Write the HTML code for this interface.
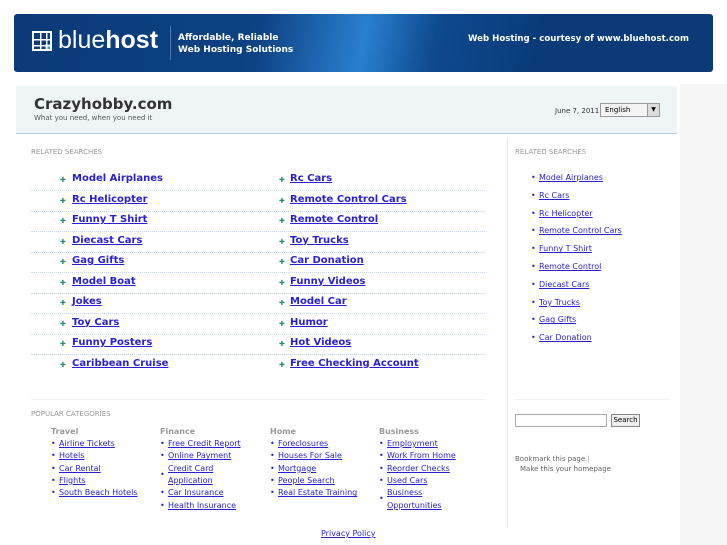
<!DOCTYPE html>
<html><head><meta charset="utf-8"><style>
*{margin:0;padding:0;box-sizing:border-box}
body{width:727px;height:545px;overflow:hidden;background:#fff;font-family:"DejaVu Sans","Liberation Sans",sans-serif;position:relative}
.a{position:absolute;white-space:nowrap}
a{color:#2a1fcf;text-decoration:underline}
#banner{left:14px;top:14px;width:699px;height:58px;border-radius:3px;background:linear-gradient(100deg,#0b3a78 0%,#0d4283 35%,#2a7fd0 50%,#0e4a8e 60%,#0a3a78 75%,#0b3a76 100%)}
#strip{left:680px;top:84px;width:47px;height:461px;background:#f6f6f6}
#hdr{left:16px;top:86px;width:661px;height:48px;background:#eff4f7;border-bottom:1px solid #b7cde8}
.ml{font-size:10px;font-weight:bold}
.bul{font-size:7px;color:#2a8a7a}
.dot{left:31px;width:454px;border-top:1px dotted #c9d6e3;height:0}
.sl{font-size:8px}
.sb{font-size:8px;color:#2a1fcf}
.cat{font-size:8px}
.ch{font-size:8px;font-weight:bold;color:#999}
.lbl{font-size:7px;color:#999}
</style></head><body>
<div id="banner" class="a"></div>
<div class="a" style="left:32px;top:31px;width:20px;height:20px;border:2px solid #fff;background:linear-gradient(#fff 0 0) 6px 0/1.5px 100% no-repeat,linear-gradient(#fff 0 0) 12px 0/1.5px 100% no-repeat,linear-gradient(#fff 0 0) 0 6px/100% 1.5px no-repeat,linear-gradient(#fff 0 0) 0 12px/100% 1.5px no-repeat,linear-gradient(#3aa 0 0) 11px 11px/6px 6px no-repeat"></div>
<div class="a" style="left:58px;top:26px;font-size:25px;color:#fff;font-family:'Liberation Sans',sans-serif">blue<b>host</b></div>
<div class="a" style="left:170px;top:26px;width:1px;height:34px;background:#4d77ad"></div>
<div class="a" style="left:178px;top:32px;font-size:9px;font-weight:bold;color:#fff;line-height:12px">Affordable, Reliable<br>Web Hosting Solutions</div>
<div class="a" style="left:468px;top:34px;font-size:8.6px;font-weight:bold;color:#fff">Web Hosting - courtesy of www.bluehost.com</div>
<div id="strip" class="a"></div>
<div id="hdr" class="a"></div>
<div class="a" style="left:34px;top:95px;font-size:15px;font-weight:bold;color:#333">Crazyhobby.com</div>
<div class="a" style="left:34px;top:114px;font-size:7px;color:#555">What you need, when you need it</div>
<div class="a" style="left:555px;top:107px;font-size:7px;color:#333">June 7, 2011</div>
<div class="a" style="left:600px;top:103px;width:60px;height:14px;border:1px solid #999;background:#f4f4f4;font-size:7px;padding:2px 4px">English</div>
<div class="a" style="left:647px;top:104px;width:12px;height:12px;background:#ddd;border-left:1px solid #999;font-size:6px;text-align:center;line-height:12px">▼</div>
<div class="a" style="left:507px;top:138px;width:1px;height:390px;background:#dfe7f2"></div>
<div class="a lbl" style="left:31px;top:148px">RELATED SEARCHES</div>
<div class="a lbl" style="left:515px;top:148px">RELATED SEARCHES</div>
<div id="main"></div>
<div class="a dot" style="top:399px;border-top:1px solid #eef2f6"></div>
<div class="a" style="left:515px;top:399px;width:155px;border-top:1px solid #eef2f6"></div>
<div class="a lbl" style="left:31px;top:410px">POPULAR CATEGORIES</div>
<div class="a" style="left:515px;top:414px;width:92px;height:13px;border:1px solid #aaa"></div>
<div class="a" style="left:611px;top:414px;width:29px;height:13px;border:1px solid #888;background:#eee;font-size:7px;text-align:center;line-height:11px">Search</div>
<div class="a" style="left:515px;top:455px;font-size:7px;color:#666">Bookmark this page <span style="color:#99b">|</span></div>
<div class="a" style="left:520px;top:465px;font-size:7px;color:#666">Make this your homepage</div>
<div class="a sl" style="left:321px;top:529px"><a>Privacy Policy</a></div>
<script>
var L=["Model Airplanes","Rc Helicopter","Funny T Shirt","Diecast Cars","Gag Gifts","Model Boat","Jokes","Toy Cars","Funny Posters","Caribbean Cruise"];
var R=["Rc Cars","Remote Control Cars","Remote Control","Toy Trucks","Car Donation","Funny Videos","Model Car","Humor","Hot Videos","Free Checking Account"];
var h="";
for(var i=0;i<10;i++){var y=173+i*20.5;
h+='<div class="a bul" style="left:60px;top:'+(y+3)+'px">✚</div><div class="a ml" style="left:72px;top:'+y+'px"><a'+(i==0?' style="text-decoration:none"':'')+'>'+L[i]+'</a></div>';
h+='<div class="a bul" style="left:279px;top:'+(y+3)+'px">✚</div><div class="a ml" style="left:290px;top:'+y+'px"><a>'+R[i]+'</a></div>';
if(i<9)h+='<div class="a dot" style="top:'+(y+17)+'px"></div>';}
var S=["Model Airplanes","Rc Cars","Rc Helicopter","Remote Control Cars","Funny T Shirt","Remote Control","Diecast Cars","Toy Trucks","Gag Gifts","Car Donation"];
for(var i=0;i<10;i++){var y=173+i*17.8;h+='<div class="a sb" style="left:531px;top:'+y+'px">•</div><div class="a sb" style="left:539px;top:'+y+'px"><a>'+S[i]+'</a></div>';}
var C=[["Travel",51,["Airline Tickets","Hotels","Car Rental","Flights","South Beach Hotels"]],["Finance",160,["Free Credit Report","Online Payment","Credit Card|Application","Car Insurance","Health Insurance"]],["Home",270,["Foreclosures","Houses For Sale","Mortgage","People Search","Real Estate Training"]],["Business",379,["Employment","Work From Home","Reorder Checks","Used Cars","Business|Opportunities"]]];
C.forEach(function(c){h+='<div class="a ch" style="left:'+c[1]+'px;top:427px">'+c[0]+'</div>';var y=439;
c[2].forEach(function(t){var p=t.split("|");var by=p.length>1?y+6:y;
h+='<div class="a cat" style="left:'+c[1]+'px;top:'+by+'px;color:#2a1fcf">•</div>';
p.forEach(function(q){h+='<div class="a cat" style="left:'+(c[1]+8)+'px;top:'+y+'px"><a>'+q+'</a></div>';y+=12.3;});});});
document.getElementById("main").innerHTML=h;
</script>
</body></html>
